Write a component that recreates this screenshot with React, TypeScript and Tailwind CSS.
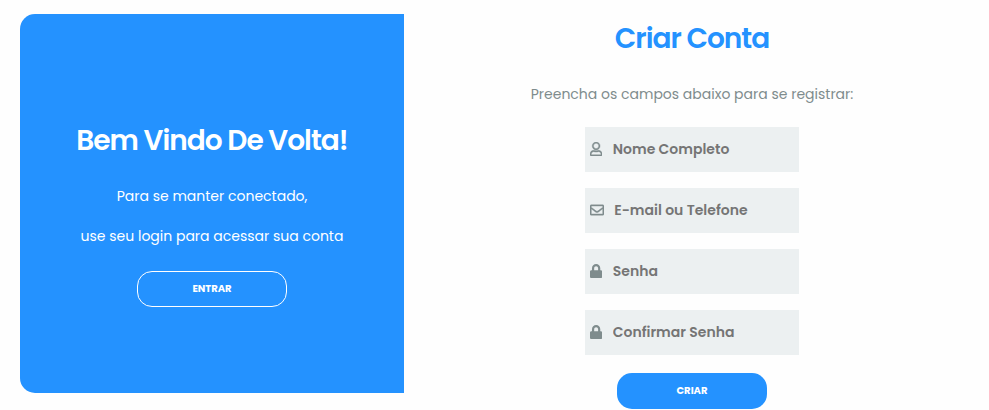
import { FaLock, FaRegEnvelope, FaRegUser } from "react-icons/fa";
import type { IconType } from "react-icons";

type FieldProps = {
  icon: IconType;
  iconStyle: string;
  type: string;
  placeholder: string;
};

const fields: FieldProps[] = [
  { icon: FaRegUser, iconStyle: "mr-[10.5px] w-[12.25px] stroke-[14px]", type: "text", placeholder: "Nome Completo" },
  { icon: FaRegEnvelope, iconStyle: "mr-[10.25px] w-[14px] stroke-[14px]", type: "text", placeholder: "E-mail ou Telefone" },
  { icon: FaLock, iconStyle: "mr-[10.5px] w-[12.25px]", type: "password", placeholder: "Senha" },
  { icon: FaLock, iconStyle: "mr-[10.5px] w-[12.25px]", type: "password", placeholder: "Confirmar Senha" },
];

function Field({ icon: Icon, iconStyle, type, placeholder }: FieldProps) {
  return (
    <label className="flex h-[45px] w-[214px] items-center bg-[#ecf0f1] pl-[5px]">
      <Icon className={`mb-px h-[14px] shrink-0 text-[#7f8c8d] ${iconStyle}`} />
      <input
        type={type}
        placeholder={placeholder}
        className="h-full w-[180px] bg-transparent text-[14px] font-semibold outline-none placeholder:text-[#757575]"
      />
    </label>
  );
}

export default function App() {
  return (
    <main className="flex h-[410px] w-[989px] overflow-hidden bg-[#fefefe] pl-[20px] pt-[14px] font-[Poppins,Inter,sans-serif]">
      <section className="flex h-[379px] w-[384px] flex-col items-center rounded-l-[15px] bg-[#2492ff] pt-[107px] text-white">
        <h2 className="h-[40px] whitespace-nowrap text-[28px] font-semibold leading-[40px] tracking-[-1px]">Bem Vindo De Volta!</h2>
        <p className="mt-[15px] whitespace-nowrap text-[14px] leading-[40px]">Para se manter conectado,</p>
        <p className="whitespace-nowrap text-[14px] leading-[40px]">use seu login para acessar sua conta</p>
        <button className="mt-[15px] h-[36px] w-[150px] rounded-[15px] border border-white pb-[2px] text-[10px] font-bold">ENTRAR</button>
      </section>
      <section className="flex w-[576px] flex-col items-center">
        <h2 className="mt-[5px] h-[40px] whitespace-nowrap text-[28px] font-semibold leading-[40px] tracking-[-1px] text-[#2492ff]">Criar Conta</h2>
        <p className="mt-[15px] whitespace-nowrap text-[14px] leading-[40px] text-[#7f8c8d]">Preencha os campos abaixo para se registrar:</p>
        <form className="mt-[13px] flex flex-col items-center gap-[16px]">
          {fields.map((field) => (
            <Field key={field.placeholder} {...field} />
          ))}
          <button type="button" className="mt-[2px] h-[36px] w-[150px] rounded-[15px] bg-[#2492ff] pb-[2px] text-[10px] font-bold text-white">CRIAR</button>
        </form>
      </section>
    </main>
  );
}
